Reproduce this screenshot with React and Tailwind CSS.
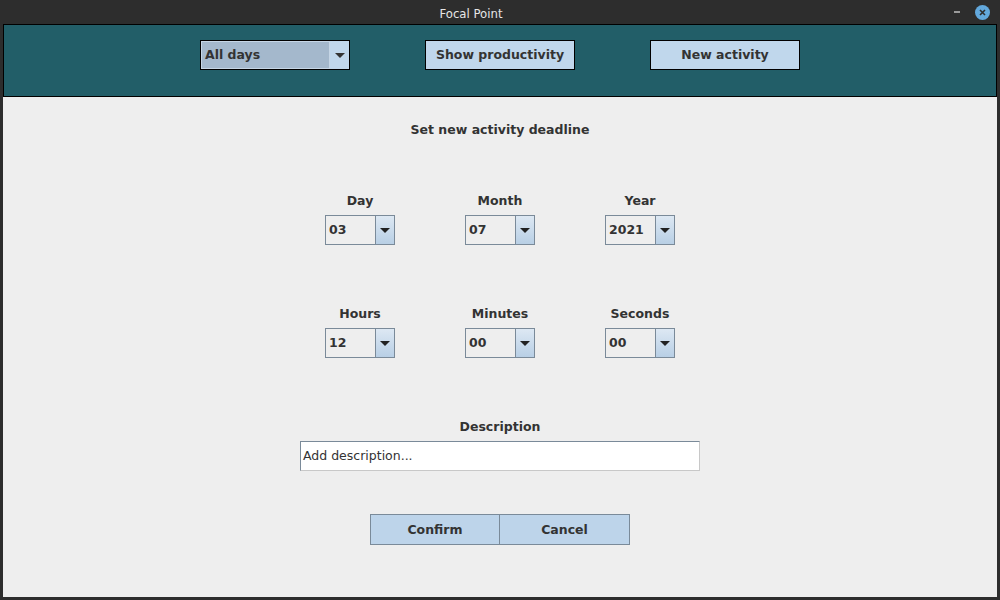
import React from "react";

const font = { fontFamily: '"DejaVu Sans", "Liberation Sans", sans-serif' };

function Combo({ value }) {
  return (
    <div className="flex h-[30px] w-[70px] border border-[#7a8a99] bg-[#eeeeee]">
      <div className="flex flex-1 items-center pl-[3px] text-[12.5px] font-bold text-[#333333]">
        {value}
      </div>
      <div className="flex w-[19px] items-center justify-center border-l border-[#7a8a99] bg-gradient-to-b from-[#dde8f3] to-[#b8cfe5]">
        <div className="h-0 w-0 border-x-[5px] border-t-[5px] border-x-transparent border-t-[#222222]" />
      </div>
    </div>
  );
}

function Field({ label, value }) {
  return (
    <div className="flex flex-col items-center">
      <div className="h-[16px] text-[12.5px] leading-[16px] font-bold text-[#333333]">{label}</div>
      <div className="mt-[6px]">
        <Combo value={value} />
      </div>
    </div>
  );
}

export default function App() {
  return (
    <div className="flex h-[600px] w-[1000px] flex-col bg-[#2d2d2d]" style={font}>
      {/* title bar */}
      <div className="relative flex h-[24px] items-center justify-center pt-[3px]">
        <span
          className="mr-[58px] text-[13px] font-medium text-[#e6e6e6]"
          style={{ fontFamily: '"DejaVu Sans Condensed", "DejaVu Sans", sans-serif' }}
        >
          Focal Point
        </span>
        <div className="absolute left-[954px] top-[11px] h-[2px] w-[6px] bg-[#9a9a9a]" />
        <div className="absolute left-[975px] top-[5px] flex h-[15px] w-[15px] items-center justify-center rounded-full bg-[#62a8dc]">
          <svg width="7" height="7" viewBox="0 0 7 7">
            <path d="M1 1 L6 6 M6 1 L1 6" stroke="#2d2d2d" strokeWidth="1.6" />
          </svg>
        </div>
      </div>

      <div className="flex flex-1 flex-col px-[3px] pb-[3px]">
        {/* teal toolbar */}
        <div className="flex h-[73px] justify-center gap-[75px] border border-black bg-[#225e68] pt-[15px]">
          <div className="flex h-[30px] w-[150px] border border-black bg-[#c0d7ec]">
            <div className="flex flex-1 items-center border border-[#c6d6e6] bg-[#a4b8cc] pl-[3px] text-[12.5px] font-bold text-[#333333]">
              All days
            </div>
            <div className="flex w-[19px] items-center justify-center">
              <div className="h-0 w-0 border-x-[5px] border-t-[5px] border-x-transparent border-t-[#333333]" />
            </div>
          </div>
          <button className="h-[30px] w-[150px] border border-black bg-[#c0d7ec] pt-px text-[12.5px] font-bold text-[#333333]">
            Show productivity
          </button>
          <button className="h-[30px] w-[150px] border border-black bg-[#c0d7ec] pt-px text-[12.5px] font-bold text-[#333333]">
            New activity
          </button>
        </div>

        {/* form */}
        <div className="flex flex-1 flex-col items-center bg-[#eeeeee] pt-[25px]">
          <div className="h-[16px] text-[12.5px] leading-[16px] font-bold text-[#333333]">
            Set new activity deadline
          </div>

          <div className="mt-[55px] grid grid-cols-[140px_140px_140px]">
            <Field label="Day" value="03" />
            <Field label="Month" value="07" />
            <Field label="Year" value="2021" />
          </div>

          <div className="mt-[61px] grid grid-cols-[140px_140px_140px]">
            <Field label="Hours" value="12" />
            <Field label="Minutes" value="00" />
            <Field label="Seconds" value="00" />
          </div>

          <div className="mt-[61px] h-[16px] text-[12.5px] leading-[16px] font-bold text-[#333333]">
            Description
          </div>
          <div className="mt-[6px] flex h-[30px] w-[400px] items-center border border-[#7a8a99] border-r-[#c8c8c8] border-b-[#c8c8c8] bg-white pl-[2px] text-[12.5px] text-[#333333]">
            Add description...
          </div>

          <div className="mt-[43px] flex">
            <button className="h-[31px] w-[130px] border border-[#7a8a99] bg-[#bdd4ea] pt-px text-[12.5px] font-bold text-[#333333]">
              Confirm
            </button>
            <button className="-ml-px h-[31px] w-[131px] border border-[#7a8a99] bg-[#bdd4ea] pt-px text-[12.5px] font-bold text-[#333333]">
              Cancel
            </button>
          </div>
        </div>
      </div>
    </div>
  );
}
